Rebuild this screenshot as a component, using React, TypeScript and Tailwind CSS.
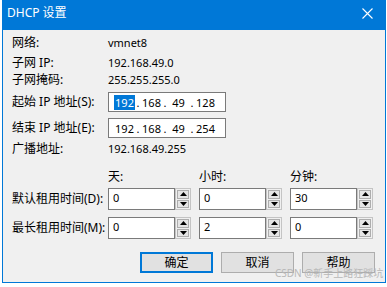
import React from 'react'

const CJK = { fontFamily: '"Noto Sans", "Noto Sans CJK SC", sans-serif' }

// ── small pieces ──────────────────────────────────────────────────────────────
const Label = ({ children }: { children: React.ReactNode }) => (
  <div className="w-[96px] shrink-0 text-[12px] text-black leading-none">{children}</div>
)

const Value = ({ children }: { children: React.ReactNode }) => (
  <div className="text-[11px] text-black leading-none">{children}</div>
)

const InfoRow = ({ label, value, className = '' }: { label: string; value: string; className?: string }) => (
  <div className={`flex items-center h-[17px] ${className}`}>
    <Label>{label}</Label>
    <Value>{value}</Value>
  </div>
)

const IpField = ({ parts, selectFirst = false }: { parts: string[]; selectFirst?: boolean }) => (
  <div className="flex items-center w-[118px] h-[20px] bg-white border border-[#7a7a7a] pl-[6px] text-[11px] text-black leading-none">
    {parts.map((p, i) => (
      <React.Fragment key={i}>
        {i > 0 && <span className="w-[8px] text-center">.</span>}
        <span className="w-[19px] flex justify-center">
          <span className={i === 0 && selectFirst ? 'bg-[#0078d7] text-white px-[1px] py-[2px]' : 'py-[2px]'}>{p}</span>
        </span>
      </React.Fragment>
    ))}
  </div>
)

const Arrow = ({ up }: { up?: boolean }) => (
  <svg width="7" height="4" viewBox="0 0 7 4">
    <path d={up ? 'M0 4 L3.5 0 L7 4 Z' : 'M0 0 L3.5 4 L7 0 Z'} fill="#000" />
  </svg>
)

const Spin = ({ value }: { value: string }) => (
  <div className="flex w-[83px] h-[22px]">
    <div className="w-[67px] h-full bg-white border border-[#7a7a7a] pl-[4px] pt-[3px] text-[11px] text-black leading-none">
      {value}
    </div>
    <div className="w-[16px] h-full flex flex-col border border-[#c4c4c4] bg-[#f0f0f0] p-[1px] gap-[1px]">
      <div className="flex-1 flex items-center justify-center bg-[#e5e5e5] border border-[#adadad]">
        <Arrow up />
      </div>
      <div className="flex-1 flex items-center justify-center bg-[#e5e5e5] border border-[#adadad]">
        <Arrow />
      </div>
    </div>
  </div>
)

const Btn = ({ children, primary }: { children: React.ReactNode; primary?: boolean }) => (
  <div
    className={`w-[73px] h-[21px] flex items-center justify-center bg-[#e1e1e1] text-[12px] text-black leading-none ${
      primary ? 'border-2 border-[#0078d7]' : 'border border-[#adadad]'
    }`}
  >
    {children}
  </div>
)

// ── App ──────────────────────────────────────────────────────────────────────
export default function App() {
  return (
    <div className="w-[387px] h-[287px] bg-white overflow-hidden relative" style={CJK}>
      <div className="ml-[2px] w-[384px] h-[283px] flex flex-col border border-t-0 border-[#0078d7] bg-[#f0f0f0] relative">
        {/* title bar */}
        <div className="h-[30px] -mx-[1px] bg-[#0078d7] flex items-center justify-between pl-[5px] pr-[13px] pb-[4px] text-white text-[12px] leading-none">
          <span>DHCP 设置</span>
          <svg width="11" height="11" viewBox="0 0 11 11">
            <path d="M0.5 0.5 L10.5 10.5 M10.5 0.5 L0.5 10.5" stroke="#fff" strokeWidth="1.1" />
          </svg>
        </div>

        <div className="flex flex-col pl-[9px]">
          <InfoRow label="网络:" value="vmnet8" className="mt-[4px]" />
          <InfoRow label="子网 IP:" value="192.168.49.0" className="mt-[3px]" />
          <InfoRow label="子网掩码:" value="255.255.255.0" />

          <div className="flex items-center mt-[4px]">
            <Label>起始 IP 地址(S):</Label>
            <IpField parts={['192', '168', '49', '128']} selectFirst />
          </div>
          <div className="flex items-center mt-[6px]">
            <Label>结束 IP 地址(E):</Label>
            <IpField parts={['192', '168', '49', '254']} />
          </div>

          <InfoRow label="广播地址:" value="192.168.49.255" className="mt-[2px]" />

          {/* lease headers */}
          <div className="flex items-center h-[16px] mt-[12px] text-[12px] text-black leading-none">
            <div className="w-[96px]" />
            <div className="w-[91px]">天:</div>
            <div className="w-[91px]">小时:</div>
            <div>分钟:</div>
          </div>

          <div className="flex items-center mt-[3px]">
            <Label>默认租用时间(D):</Label>
            <div className="flex gap-[8px]">
              <Spin value="0" />
              <Spin value="0" />
              <Spin value="30" />
            </div>
          </div>
          <div className="flex items-center mt-[7px]">
            <Label>最长租用时间(M):</Label>
            <div className="flex gap-[8px]">
              <Spin value="0" />
              <Spin value="2" />
              <Spin value="0" />
            </div>
          </div>

          <div className="flex justify-end gap-[8px] mt-[13px] pr-[10px]">
            <Btn primary>确定</Btn>
            <Btn>取消</Btn>
            <Btn>帮助</Btn>
          </div>
        </div>

        {/* watermark */}
        <div className="absolute left-[272px] top-[268px] whitespace-nowrap text-[10px] leading-none text-[#b8b8b8]">
          CSDN @新手上路狂踩坑
        </div>
      </div>
    </div>
  )
}
